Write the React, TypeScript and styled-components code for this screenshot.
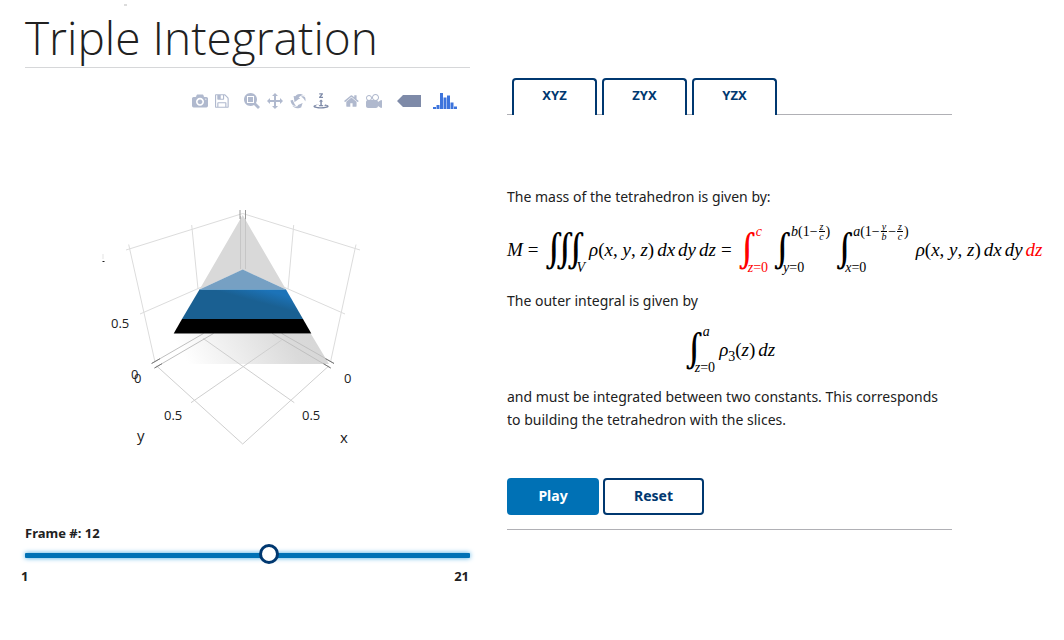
import React, { useState } from "react";
import styled, { createGlobalStyle, css } from "styled-components";

const blue = "#0071b5";
const navy = "#003870";
const ink = "#212121";

const GlobalStyle = createGlobalStyle`
  *, *::before, *::after { box-sizing: border-box; }
  body {
    margin: 0;
    background: #fff;
    color: ${ink};
    font-family: "Noto Sans", "Open Sans", sans-serif;
    font-size: 14px;
    line-height: 23px;
  }
`;

const Page = styled.main`
  display: grid;
  grid-template-columns: minmax(0, 1fr) minmax(0, 1fr);
  column-gap: 37px;
  padding: 0 112px 40px 25px;
`;

const Column = styled.section`
  display: flex;
  flex-direction: column;
`;

const Title = styled.h1`
  position: relative;
  margin: 0;
  padding: 8px 0 0;
  height: 68px;
  border-bottom: 1px solid #d6d7d9;
  font-family: "Open Sans", "Noto Sans", sans-serif;
  font-size: 46px;
  font-weight: 300;
  line-height: 58px;
  white-space: nowrap;
  &::before {
    content: "";
    position: absolute;
    top: 4px;
    left: 99px;
    width: 3px;
    height: 2px;
    background: #dcdcdc;
  }
`;

const ModeBar = styled.div`
  display: flex;
  justify-content: flex-end;
  gap: 15px;
  height: 48px;
  padding: 25px 12px 0 0;
`;

const ToolGroup = styled.div<{ $wide?: boolean }>`
  display: flex;
  gap: ${(p) => (p.$wide ? 12 : 7)}px;
`;

const Tool = styled.button<{ $active?: boolean }>`
  display: flex;
  padding: 0;
  border: 0;
  background: none;
  color: ${(p) => (p.$active ? "#7e8aa8" : "#b0b9ce")};
  cursor: pointer;
  svg { display: block; height: 16px; }
`;

const Plot = styled.svg`
  display: block;
  width: 100%;
  font-family: "Open Sans", "Noto Sans", sans-serif;
  font-size: 13px;
  fill: ${ink};
`;

const SliderLabel = styled.label`
  font-size: 13px;
  font-weight: 700;
  line-height: 24px;
`;

const Slider = styled.input`
  appearance: none;
  width: 100%;
  height: 20px;
  margin: 0;
  background: none;
  outline: none;
  &::-webkit-slider-runnable-track {
    height: 5px;
    border-radius: 1px;
    background: ${blue};
    box-shadow: 0 0 5px #3ea6e0;
  }
  &::-webkit-slider-thumb {
    appearance: none;
    width: 20px;
    height: 20px;
    margin-top: -9px;
    border: 3px solid ${navy};
    border-radius: 50%;
    background: #fff;
  }
`;

const Range = styled.div`
  display: flex;
  justify-content: space-between;
  margin: 0 1px 0 -4px;
  font-size: 13px;
  font-weight: 700;
`;

const Tabs = styled.div`
  display: flex;
  gap: 5px;
  height: 115px;
  padding: 78px 5px 0;
  border-bottom: 1px solid #b0b0b5;
`;

const Tab = styled.button`
  width: 85px;
  height: 37px;
  padding: 0 0 6px;
  border: 2px solid ${navy};
  border-bottom: 0;
  border-radius: 4px 4px 0 0;
  background: #fff;
  color: ${navy};
  font: 700 13px "Noto Sans", sans-serif;
  cursor: pointer;
`;

const Content = styled.div`
  display: flex;
  flex-direction: column;
  padding: 70px 0 47px;
`;

const Text = styled.p`
  margin: 0;
`;

const Formula = styled.div<{ $center?: boolean }>`
  display: flex;
  align-items: center;
  justify-content: ${(p) => (p.$center ? "center" : "flex-start")};
  height: ${(p) => (p.$center ? 73 : 81)}px;
  padding-top: 2px;
  font-family: "Liberation Serif", serif;
  font-size: 19px;
  line-height: 24px;
  color: #000;
  white-space: nowrap;
  sub { font-size: 14px; line-height: 0; }
`;

const Differential = styled.i`
  margin-left: 3px;
`;

const Relation = styled.span`
  margin: 0 5px;
`;

const RED = css`color: #f00;`;

const IntegralBox = styled.span<{ $red?: boolean; $space: number }>`
  display: flex;
  flex: none;
  height: 50px;
  margin-right: ${(p) => p.$space}px;
  ${(p) => p.$red && RED}
`;

const Sign = styled.span`
  width: 11px;
  font-family: "DejaVu Math TeX Gyre", "DejaVu Serif", serif;
  font-size: 34px;
  line-height: 50px;
`;

const Limits = styled.span`
  display: flex;
  flex-direction: column;
  justify-content: space-between;
  font-size: 14px;
  line-height: 14px;
`;

const Upper = styled.span`
  display: flex;
  align-items: center;
  height: 14px;
  padding-left: 8px;
`;

const Fraction = styled.span`
  display: inline-flex;
  flex-direction: column;
  align-items: center;
  margin: 0 1px;
  font-size: 10px;
  font-style: italic;
  line-height: 9px;
  span:first-child { border-bottom: 1px solid currentColor; padding: 0 1px; }
`;

const Red = styled.span`
  ${RED}
`;

const Actions = styled.div`
  display: flex;
  gap: 4px;
  height: 52px;
  border-bottom: 1px solid #b0b0b5;
`;

const Action = styled.button<{ $primary?: boolean }>`
  width: ${(p) => (p.$primary ? 92 : 101)}px;
  height: 37px;
  padding: 0 0 2px;
  border: 2px solid ${(p) => (p.$primary ? blue : navy)};
  border-radius: 4px;
  background: ${(p) => (p.$primary ? blue : "#fff")};
  color: ${(p) => (p.$primary ? "#fff" : navy)};
  font: 700 14px "Noto Sans", sans-serif;
  cursor: pointer;
`;

const icons = {
  camera: { w: 1000, d: "m500 450c-83 0-150-67-150-150 0-83 67-150 150-150 83 0 150 67 150 150 0 83-67 150-150 150z m400 150h-120c-16 0-34 13-39 29l-31 93c-6 15-23 28-40 28h-340c-16 0-34-13-39-28l-31-94c-6-15-23-28-40-28h-120c-55 0-100-45-100-100v-450c0-55 45-100 100-100h800c55 0 100 45 100 100v450c0 55-45 100-100 100z m-400-550c-138 0-250 112-250 250 0 138 112 250 250 250 138 0 250-112 250-250 0-138-112-250-250-250z m365 380c-19 0-35 16-35 35 0 19 16 35 35 35 19 0 35-16 35-35 0-19-16-35-35-35z" },
  disk: { w: 857, d: "m214-7h429v214h-429v-214z m500 0h72v500q0 8-6 21t-11 20l-157 156q-5 6-19 12t-22 5v-232q0-22-15-38t-38-16h-322q-22 0-37 16t-16 38v232h-72v-714h72v232q0 22 16 38t37 16h465q22 0 38-16t15-38v-232z m-214 518v178q0 8-5 13t-13 5h-107q-7 0-13-5t-5-13v-178q0-8 5-13t13-5h107q7 0 13 5t5 13z m357-18v-518q0-22-15-38t-38-16h-750q-23 0-38 16t-16 38v750q0 22 16 38t38 16h517q23 0 50-12t42-26l156-157q16-15 27-42t11-49z" },
  zoom: { w: 1000, d: "m1000-25l-250 251c40 63 63 138 63 218 0 224-182 406-407 406-224 0-406-182-406-406s183-406 407-406c80 0 155 22 218 62l250-250 125 125z m-812 250l0 438 437 0 0-438-437 0z m62 375l313 0 0-312-313 0 0 312z" },
  pan: { w: 1000, d: "m1000 350l-187 188 0-125-250 0 0 250 125 0-188 187-187-187 125 0 0-250-250 0 0 125-188-188 186-187 0 125 252 0 0-250-125 0 187-188 188 188-125 0 0 250 250 0 0-126 187 188z" },
  orbit: { w: 1000, d: "m922 660c-5 4-9 7-14 11-359 263-580-31-580-31l-102 28 58-400c0 1 1 1 2 2 118 108 351 249 351 249s-62 27-100 42c88 83 222 183 347 122 16-8 30-17 44-27-2 1-4 2-6 4z m36-329c0 0 64 229-88 296-62 27-124 14-175-11 157-78 225-208 249-266 8-19 11-31 11-31 2 5 6 15 11 32-5-13-8-20-8-20z m-775-239c70-31 117-50 198-32-121 80-199 346-199 346l-96-15-58-12c0 0 55-226 155-287z m603 133l-317-139c0 0 4-4 19-14 7-5 24-15 24-15s-177-147-389 4c235-287 536-112 536-112l31-22 100 299-4-1z" },
  turntable: { w: 1000, d: "m833 5l-17 108v41l-130-65 130-66c0 0 0 38 0 39 0-1 36-14 39-25 4-15-6-22-16-30-15-12-39-16-56-20-90-22-187-23-279-23-261 0-341 34-353 59 3 60 228 110 228 110-140-8-351-35-351-116 0-120 293-142 474-142 155 0 477 22 477 142 0 50-74 79-163 96z m-374 94c-58-5-99-21-99-40 0-24 65-43 144-43 79 0 143 19 143 43 0 19-42 34-98 40v216h87l-132 135-133-135h88v-216z m167 515h-136v1c16 16 31 34 46 52l84 109v54h-230v-71h124v-1c-16-17-28-32-44-51l-89-114v-51h245v72z" },
  home: { w: 928, d: "m786 296v-267q0-15-11-26t-25-10h-214v214h-143v-214h-214q-15 0-25 10t-11 26v267q0 1 0 2t0 2l321 264 321-264q1-1 1-4z m124 39l-34-41q-5-5-12-6h-2q-7 0-12 3l-386 322-386-322q-7-4-13-4-7 2-12 7l-35 41q-4 5-3 13t6 12l401 334q18 15 42 15t43-15l136-114v109q0 8 5 13t13 5h107q8 0 13-5t5-13v-227l122-102q5-5 6-12t-4-13z" },
  movie: { w: 1000, d: "m938 413l-188-125c0 37-17 71-44 94 64 38 107 107 107 187 0 121-98 219-219 219-121 0-219-98-219-219 0-61 25-117 66-156h-115c30 33 49 76 49 125 0 103-84 187-187 187s-188-84-188-187c0-57 26-107 65-141-38-22-65-62-65-109v-250c0-70 56-126 125-126h500c69 0 125 56 125 126l188-126c34 0 62 28 62 63v375c0 35-28 63-62 63z m-750 0c-69 0-125 56-125 125s56 125 125 125 125-56 125-125-56-125-125-125z m406-1c-87 0-157 70-157 157 0 86 70 156 157 156s156-70 156-156-70-157-156-157z" },
  tooltip: { w: 1500, d: "m375 725l0 0-375-375 375-374 0-1 1125 0 0 750-1125 0z" },
};

type IconName = keyof typeof icons;

function ToolButton({ icon, label, active }: { icon: IconName; label: string; active?: boolean }) {
  return (
    <Tool type="button" aria-label={label} $active={active}>
      <svg viewBox={`0 0 ${icons[icon].w} 1000`} fill="currentColor" aria-hidden="true">
        <path transform="matrix(1 0 0 -1 0 850)" d={icons[icon].d} />
      </svg>
    </Tool>
  );
}

function Toolbar() {
  return (
    <ModeBar>
      <ToolGroup>
        <ToolButton icon="camera" label="Download plot" />
        <ToolButton icon="disk" label="Save and edit plot" />
      </ToolGroup>
      <ToolGroup>
        <ToolButton icon="zoom" label="Zoom" />
        <ToolButton icon="pan" label="Pan" />
        <ToolButton icon="orbit" label="Orbital rotation" />
        <ToolButton icon="turntable" label="Turntable rotation" active />
      </ToolGroup>
      <ToolGroup>
        <ToolButton icon="home" label="Reset camera" />
        <ToolButton icon="movie" label="Reset camera to last save" />
      </ToolGroup>
      <ToolGroup $wide>
        <ToolButton icon="tooltip" label="Toggle closest data on hover" active />
        <Tool type="button" aria-label="Produced with Plotly">
          <svg width="25" height="16" viewBox="0 0 25 16" fill="#3d74dc" aria-hidden="true">
            <path d="M0 14h3v2H0zM3.500 12h3v4h-3zM7 0h3v16H7zM10.500 4.500h3V16h-3zM14 2.500h3V16h-3zM17.500 9.500h3V16h-3zM21 13.500h3V16h-3z" />
          </svg>
        </Tool>
      </ToolGroup>
    </ModeBar>
  );
}

function Tetrahedron() {
  return (
    <Plot viewBox="25 116 445 405" role="img" aria-label="Slices stacked inside a tetrahedron">
      <defs>
        <linearGradient id="floor" x1="0" x2="1" y1="0.1" y2="0">
          <stop offset="0.1" stopColor="#fff" />
          <stop offset="0.75" stopColor="#dadada" />
          <stop offset="1" stopColor="#d6d6d6" />
        </linearGradient>
        <linearGradient id="side" gradientUnits="userSpaceOnUse" x1="262" y1="303" x2="265.500" y2="290">
          <stop offset="0" stopColor="#1a6092" />
          <stop offset="1" stopColor="#1c73b8" />
        </linearGradient>
      </defs>
      <path fill="url(#floor)" d="M174 334H311L329 364H155Z" />
      <g fill="none" stroke="#dcdcdc" strokeWidth="1">
        <path d="M126 250L242.700 213.500L360 250M128.700 244.500L155 362M356 244.500L330.500 362" />
        <path d="M191.700 225L198 289M293.700 225L288 289M140 314L242.700 269L345 314" />
        <path d="M156.700 366L242.700 444L328.700 366" stroke="#cfcfcf" />
        <path d="M191 402.700L281.700 340M294.300 402.700L203.300 338.500" stroke="#cfcfcf" />
        <path d="M152 363.300L203.500 333.500M154.500 368L213.500 333.500M334 363.300L281.700 333.500M330.700 368L272.300 333.500" stroke="#c0c0c0" />
        <path d="M151.500 363.500L160 358.700M154.500 368L162 363.700M334 363.500L325.500 358.700M330.700 368L323.500 363.700" stroke="#777" />
      </g>
      <path fill="#d9d9d9" d="M242.700 215L286 289.500L242.700 269.500L199.500 289.500Z" />
      <path stroke="#c6c6c6" d="M240.500 216V269M245.500 216V269" />
      <path stroke="#999" d="M240 210V219M245.500 210V219" />
      <path fill="#76a0c3" d="M242.700 269.500L286 289.500H199.500Z" />
      <path fill="url(#side)" d="M199.500 289.500H286L303 319H182Z" />
      <path stroke="#6aa0c8" strokeWidth="1" d="M199.500 289.500H286" />
      <path d="M182 319H303L311.300 333.500H173.700Z" fill="#000" />
      <text x="111" y="328">0.5</text>
      <text x="131" y="379">0</text>
      <text x="134" y="383">0</text>
      <text x="344" y="383">0</text>
      <text x="164" y="420">0.5</text>
      <text x="302" y="420">0.5</text>
      <text x="137" y="441" fontSize="15">y</text>
      <text x="340" y="443" fontSize="15">x</text>
      <path d="M102.500 261h2v1h-2z" />
      <path fill="#e4e4e4" d="M102.500 254h1v5h-1z" />
    </Plot>
  );
}

function Density() {
  return (
    <span>
      <i>ρ</i>(<i>x</i>, <i>y</i>, <i>z</i>)
    </span>
  );
}

function Frac({ top, bottom }: { top: string; bottom: string }) {
  return (
    <Fraction>
      <span>{top}</span>
      <span>{bottom}</span>
    </Fraction>
  );
}

function Integral({ upper, variable, red, space }: { upper: React.ReactNode; variable: string; red?: boolean; space: number }) {
  return (
    <IntegralBox $red={red} $space={space}>
      <Sign>∫</Sign>
      <Limits>
        <Upper>{upper}</Upper>
        <span><i>{variable}</i>=0</span>
      </Limits>
    </IntegralBox>
  );
}

function VolumeIntegral() {
  return (
    <IntegralBox $space={4}>
      <Sign>∫</Sign>
      <Sign>∫</Sign>
      <Sign>∫</Sign>
      <Limits>
        <Upper />
        <i>V</i>
      </Limits>
    </IntegralBox>
  );
}

export default function App() {
  const [frame, setFrame] = useState(12);
  return (
    <>
      <GlobalStyle />
      <Page>
        <Column>
          <Title>Triple Integration</Title>
          <Toolbar />
          <Tetrahedron />
          <SliderLabel htmlFor="frame">Frame #: {frame}</SliderLabel>
          <Slider id="frame" type="range" min={1} max={21} value={frame} onChange={(e) => setFrame(Number(e.target.value))} />
          <Range>
            <span>1</span>
            <span>21</span>
          </Range>
        </Column>
        <Column>
          <Tabs role="tablist">
            <Tab type="button" role="tab" aria-selected="true">XYZ</Tab>
            <Tab type="button" role="tab">ZYX</Tab>
            <Tab type="button" role="tab">YZX</Tab>
          </Tabs>
          <Content>
            <Text>The mass of the tetrahedron is given by:</Text>
            <Formula>
              <i>M</i>
              <Relation>=</Relation>
              <VolumeIntegral />
              <Density />
              <Differential>dx</Differential>
              <Differential>dy</Differential>
              <Differential>dz</Differential>
              <Relation>=</Relation>
              <Integral red upper={<i>c</i>} variable="z" space={4} />
              <Integral upper={<><i>b</i>(1−<Frac top="z" bottom="c" />)</>} variable="y" space={4} />
              <Integral upper={<><i>a</i>(1−<Frac top="y" bottom="b" />−<Frac top="z" bottom="c" />)</>} variable="x" space={7} />
              <Density />
              <Differential>dx</Differential>
              <Differential>dy</Differential>
              <Red><Differential>dz</Differential></Red>
            </Formula>
            <Text>The outer integral is given by</Text>
            <Formula $center>
              <Integral upper={<i>a</i>} variable="z" space={4} />
              <span><i>ρ</i><sub>3</sub>(<i>z</i>)</span>
              <Differential>dz</Differential>
            </Formula>
            <Text>and must be integrated between two constants. This corresponds to building the tetrahedron with the slices.</Text>
          </Content>
          <Actions>
            <Action type="button" $primary>Play</Action>
            <Action type="button">Reset</Action>
          </Actions>
        </Column>
      </Page>
    </>
  );
}
